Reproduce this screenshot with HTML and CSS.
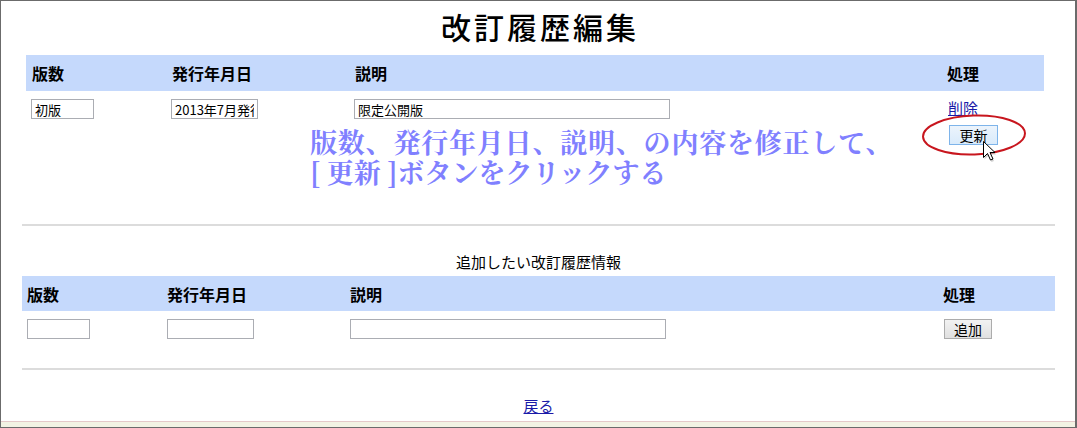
FILE: index.html
```html
<!DOCTYPE html>
<html lang="ja">
<head>
<meta charset="UTF-8">
<title>改訂履歴編集</title>
<link rel="stylesheet" href="styles.css">
</head>
<body>

<div class="window">
  <main class="page">
    <h1>改訂履歴編集</h1>

    <!-- 既存の改訂履歴 -->
    <table class="rev-table edit">
      <colgroup><col style="width:140px"><col style="width:183px"><col style="width:592px"><col></colgroup>
      <thead>
        <tr><th>版数</th><th>発行年月日</th><th>説明</th><th>処理</th></tr>
      </thead>
      <tbody>
        <tr>
          <td><input class="in-ver" value="初版"></td>
          <td><input class="in-date" value="2013年7月発行"></td>
          <td><input class="in-desc" value="限定公開版"></td>
          <td>
            <a href="#" class="del">削除</a>
            <button class="btn btn-upd">更新</button>
          </td>
        </tr>
      </tbody>
    </table>

    <hr class="sep">

    <!-- 追加 -->
    <p class="add-caption">追加したい改訂履歴情報</p>
    <table class="rev-table add">
      <colgroup><col style="width:140px"><col style="width:183px"><col style="width:593px"><col></colgroup>
      <thead>
        <tr><th>版数</th><th>発行年月日</th><th>説明</th><th>処理</th></tr>
      </thead>
      <tbody>
        <tr>
          <td><input class="in-ver"></td>
          <td><input class="in-date"></td>
          <td><input class="in-desc"></td>
          <td><button class="btn btn-add">追加</button></td>
        </tr>
      </tbody>
    </table>

    <hr class="sep">

    <p class="back"><a href="#">戻る</a></p>
  </main>

  <div class="statusbar"></div>

  <!-- 注釈（スクリーンショット上の書き込み） -->
  <div class="note">
    <span class="note-l1">版数、発行年月日、説明、の内容を修正して、</span>
    <span>[ 更新 ]ボタンをクリックする</span>
  </div>
  <svg class="mark" viewBox="0 0 108 46" width="108" height="46">
    <ellipse cx="54" cy="22" rx="51" ry="19.5" fill="none" stroke="#c8161e" stroke-width="2" transform="rotate(-2 54 22)"/>
  </svg>
  <svg class="cursor" viewBox="0 0 14 22" width="14" height="22">
    <path d="M1.5 2.5 L1.5 18.5 L5.5 14.5 L8.5 21 L11 20 L8 13.5 L13 13.5 Z" fill="#999" opacity=".45"/>
    <path d="M.5 .5 L.5 16.5 L4.5 12.5 L7.5 19 L10 18 L7 11.5 L12 11.5 Z" fill="#fff" stroke="#000" stroke-width="1" stroke-linejoin="miter"/>
  </svg>
</div>

</body>
</html>
```

FILE: styles.css
```css
:root{
  --frame   : #6b6b6b;
  --head-bg : #c5d9fc;
  --line    : #dcdcdc;
  --link    : #1a1aa8;
  --note    : #8080ff;
}
*{box-sizing:border-box;}
html,body{margin:0;height:100%;background:#fff;color:#000;
  font-family:"Noto Sans CJK JP","Liberation Sans",sans-serif;}
a{color:var(--link);}

/* ウィンドウ枠 */
.window{
  position:relative;height:428px;display:flex;flex-direction:column;
  border:1px solid var(--frame);border-right-width:2px;
}
.page{flex:1;padding:0 20px 0 21px;}
.statusbar{height:6px;border-top:1px solid #e4c9c9;background:#f2f3e4;}

h1{margin:7px 0 11px;font-size:30px;line-height:36px;font-weight:500;
  text-align:center;letter-spacing:3px;padding-left:3px;}

/* テーブル */
.rev-table{border-collapse:collapse;table-layout:fixed;}
.rev-table th{background:var(--head-bg);text-align:left;font-size:16px;font-weight:700;}
.rev-table td{vertical-align:top;padding-top:8px;}

.edit{width:1018px;margin:0 0 78px 4px;}
.edit th{height:36px;padding:0 0 0 6px;}
.edit td{padding-left:5px;}

.add{width:100%;margin-bottom:28px;}
.add th{height:35px;padding:0 0 0 5px;}
.add td{padding-left:5px;}

input{
  display:block;height:20px;border:1px solid #abadb3;padding:0 3px;
  font:13px "Noto Sans CJK JP",sans-serif;color:#000;background:#fff;
}
.in-ver{width:63px;}
.in-date{width:87px;}
.in-desc{width:316px;}

.del{display:block;width:max-content;font-size:15px;line-height:18px;margin-left:2px;}

.btn{
  display:block;height:20px;padding:0;font:14px "Noto Sans CJK JP",sans-serif;
  color:#000;line-height:18px;border-radius:0;
}
.btn-upd{width:49px;margin:8px 0 0 3px;border:1px solid #7eb4ea;
  background:linear-gradient(#ecf4fc,#d9ebfb);}
.btn-add{width:48px;margin-left:1px;border:1px solid #acacac;
  background:linear-gradient(#f2f2f2,#e0e0e0);}

.sep{border:0;height:2px;margin:0;background:var(--line);}

.add-caption{margin:27px 0 5px;text-align:center;font-size:15px;line-height:18px;}
.back{margin:27px 0 0;text-align:center;font-size:15px;line-height:18px;}

/* 注釈 */
.note{
  position:absolute;left:309px;top:126px;
  font-family:"Noto Serif CJK JP","Noto Sans CJK JP",serif;font-weight:700;
  font-size:27px;color:var(--note);
}
.note span{display:block;height:30px;line-height:30px;white-space:nowrap;}
.note-l1{letter-spacing:.8px;}
.mark{position:absolute;left:919px;top:112px;}
.cursor{position:absolute;left:982px;top:140px;}
```
